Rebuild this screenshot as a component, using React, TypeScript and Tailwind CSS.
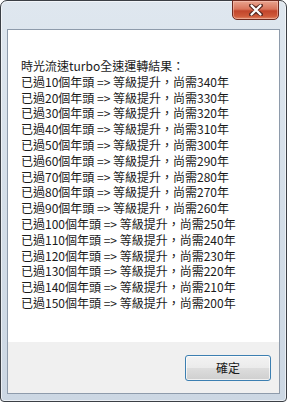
const lines: string[] = [
  "時光流速turbo全速運轉結果：",
  ...Array.from({ length: 15 }, (_, i) => {
    const years = (i + 1) * 10;
    return `已過${years}個年頭 => 等級提升，尚需${350 - years}年`;
  }),
];

const CloseButton = () => {
  return (
    <div className="w-[47px] h-[20px] -mt-px flex items-center justify-center rounded-b-[5px] border border-[#6e2a1f] bg-[linear-gradient(180deg,#e9a48f_0%,#d9755c_45%,#c2452b_55%,#cf5a3a_85%,#e08a6a_100%)] shadow-[inset_0_0_0_1px_rgba(255,210,200,0.45)]">
      <svg width="14" height="12" viewBox="0 0 14 12">
        <path
          d="M2 1.5 L7 5 L12 1.5 M2 10.5 L7 7 L12 10.5 M2 1.5 L12 10.5 M12 1.5 L2 10.5"
          stroke="#5a2a22"
          strokeWidth="4"
          strokeLinecap="round"
          fill="none"
        />
        <path
          d="M2.5 1.5 L11.5 10.5 M11.5 1.5 L2.5 10.5"
          stroke="#ffffff"
          strokeWidth="2.2"
          strokeLinecap="round"
          fill="none"
        />
      </svg>
    </div>
  );
};

export default function App() {
  return (
    <div className="w-[287px] h-[402px] bg-white">
      <div className="w-full h-full flex flex-col rounded-t-[7px] rounded-b-[4px] border border-[#3b3f45] bg-[linear-gradient(180deg,#dfe7ef_0%,#d4dee8_50%,#ccd7e3_100%)] shadow-[inset_0_0_0_1px_rgba(255,255,255,0.6)]">
        <div className="h-[28px] flex justify-end pr-[7px]">
          <CloseButton />
        </div>
        <div className="mx-[6px] mb-[7px] flex-1 flex flex-col border border-[#8e9bab] bg-[#f0f0f0]">
          <div
            className="h-[312px] bg-white pt-[28px] pl-[13px] text-[12px] leading-[15.8px] text-[#1a1a1a]"
            style={{ fontFamily: '"Noto Sans CJK TC", "Noto Sans", sans-serif' }}
          >
            {lines.map((line, i) => (
              <p key={i} className="whitespace-pre">
                {line}
              </p>
            ))}
          </div>
          <div className="flex-1 flex justify-end items-start pt-[13px] pr-[8px]">
            <button
              className="w-[86px] h-[26px] rounded-[3px] border border-[#3c7fb1] bg-[linear-gradient(180deg,#f3f3f3_0%,#ebebeb_48%,#dddddd_52%,#cfcfcf_100%)] shadow-[inset_0_0_0_1px_rgba(255,255,255,0.7)] text-[12px] text-[#1a1a1a]"
              style={{ fontFamily: '"Noto Sans CJK TC", "Noto Sans", sans-serif' }}
            >
              確定
            </button>
          </div>
        </div>
      </div>
    </div>
  );
}
